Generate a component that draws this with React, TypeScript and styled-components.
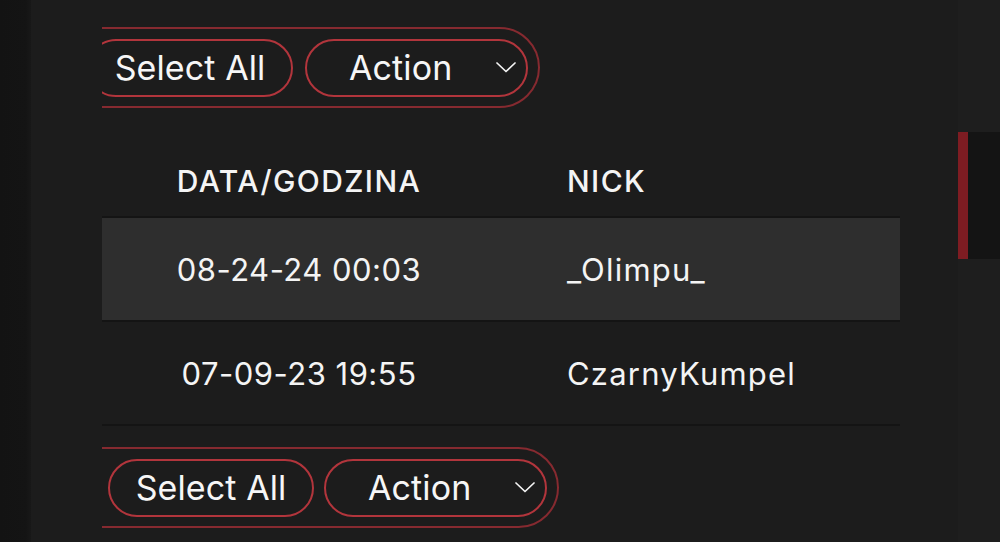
import React from "react";
import styled, { createGlobalStyle } from "styled-components";

const Global = createGlobalStyle`
  html, body { margin: 0; padding: 0; background: #1c1c1c; }
  body { font-family: "Inter", "Open Sans", sans-serif; color: #f4f4f4; }
  * { box-sizing: border-box; }
`;

const Page = styled.div`
  display: flex;
  width: 1000px;
  height: 542px;
  overflow: hidden;
  background: #1c1c1c;
`;

const LeftRail = styled.div`
  width: 31px;
  flex: none;
  background: linear-gradient(90deg, #131313 0, #141414 26px, #181818 31px);
`;

const Main = styled.main`
  flex: 1;
  padding-left: 71px;
  display: flex;
  flex-direction: column;
`;

const Content = styled.div`
  width: 798px;
  display: flex;
  flex-direction: column;
`;

const ToolbarClip = styled.div<{ $top: number }>`
  overflow: hidden;
  margin-top: ${(p) => p.$top}px;
`;

const Pill = styled.div<{ $padLeft: number; $gap: number }>`
  display: inline-flex;
  align-items: center;
  gap: ${(p) => p.$gap}px;
  margin-left: -60px;
  height: 81px;
  padding: 10px 10px 10px ${(p) => p.$padLeft}px;
  border: 2px solid #862a30;
  border-radius: 999px;
`;

const PillButton = styled.button`
  height: 58px;
  width: 206px;
  padding: 0;
  display: flex;
  align-items: center;
  justify-content: center;
  background: transparent;
  color: #f6f6f6;
  border: 2px solid #b2353c;
  border-radius: 999px;
  font-family: inherit;
  font-size: 34px;
  font-weight: 400;
  letter-spacing: 0.1px;
`;

const SelectButton = styled(PillButton)`
  width: 223px;
  justify-content: flex-start;
  padding: 0 10px 0 42px;
`;

const Chevron = styled.svg`
  margin-left: auto;
  flex: none;
`;

const Table = styled.div`
  display: flex;
  flex-direction: column;
  margin-top: 38px;
`;

const Row = styled.div<{ $bg: string; $h: number }>`
  display: grid;
  grid-template-columns: 394px 1fr;
  align-items: center;
  height: ${(p) => p.$h}px;
  background: ${(p) => p.$bg};
  border-bottom: 2px solid #141414;
`;

const DateCell = styled.div<{ $head?: boolean }>`
  text-align: center;
  font-size: ${(p) => (p.$head ? 30 : 31)}px;
  font-weight: ${(p) => (p.$head ? 500 : 400)};
  letter-spacing: ${(p) => (p.$head ? 1.4 : 0.5)}px;
`;

const NickCell = styled.div<{ $head?: boolean }>`
  padding-left: 71px;
  font-size: ${(p) => (p.$head ? 30 : 31)}px;
  font-weight: ${(p) => (p.$head ? 500 : 400)};
  letter-spacing: ${(p) => (p.$head ? 1.4 : 1.2)}px;
`;

const RightRail = styled.div`
  width: 42px;
  flex: none;
  background: #1e1e1e;
  padding-top: 132px;
`;

const Thumb = styled.div`
  height: 127px;
  background: #141414;
  border-left: 10px solid #7e1c22;
`;

const ChevronIcon = () => (
  <Chevron width="20" height="11" viewBox="0 0 20 11" fill="none">
    <polyline points="1,1 10,9.5 19,1" stroke="#f4f4f4" strokeWidth="1.7" strokeLinecap="round" strokeLinejoin="round" />
  </Chevron>
);

const Toolbar = ({ top, padLeft, gap }: { top: number; padLeft: number; gap: number }) => (
  <ToolbarClip $top={top}>
    <Pill $padLeft={padLeft} $gap={gap}>
      <PillButton>Select All</PillButton>
      <SelectButton>
        Action
        <ChevronIcon />
      </SelectButton>
    </Pill>
  </ToolbarClip>
);

const rows = [
  { date: "08-24-24 00:03", nick: "_Olimpu_", bg: "#2e2e2e" },
  { date: "07-09-23 19:55", nick: "CzarnyKumpel", bg: "#1c1c1c" },
];

export default function App() {
  return (
    <>
      <Global />
      <Page>
        <LeftRail />
        <Main>
          <Content>
            <Toolbar top={27} padLeft={43} gap={12} />
            <Table>
              <Row $bg="#1c1c1c" $h={72}>
                <DateCell $head>DATA/GODZINA</DateCell>
                <NickCell $head>NICK</NickCell>
              </Row>
              {rows.map((r) => (
                <Row key={r.date} $bg={r.bg} $h={104}>
                  <DateCell>{r.date}</DateCell>
                  <NickCell>{r.nick}</NickCell>
                </Row>
              ))}
            </Table>
            <Toolbar top={21} padLeft={64} gap={10} />
          </Content>
        </Main>
        <RightRail>
          <Thumb />
        </RightRail>
      </Page>
    </>
  );
}
